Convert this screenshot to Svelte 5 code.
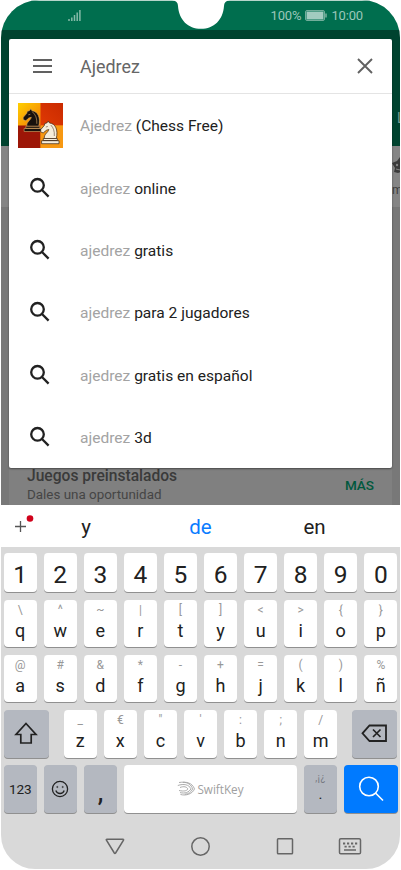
<script lang="ts">
	type Key = { main: string; alt?: string };

	const query = 'Ajedrez';

	const suggestions = [
		{ typed: 'ajedrez', rest: 'online' },
		{ typed: 'ajedrez', rest: 'gratis' },
		{ typed: 'ajedrez', rest: 'para 2 jugadores' },
		{ typed: 'ajedrez', rest: 'gratis en español' },
		{ typed: 'ajedrez', rest: '3d' }
	];

	function keys(main: string, alt: string): Key[] {
		return [...main].map((m, i) => ({ main: m, alt: alt[i] }));
	}

	const numbers = [...'1234567890'];
	const topRow = keys('qwertyuiop', '\\^~|[]<>{}');
	const homeRow = keys('asdfghjklñ', '@#&*-+=()%');
	const bottomRow = keys('zxcvbnm', '_€"\':;/');
</script>

{#snippet horse()}
	<path
		d="M4.500 18.500c-.5-4.500 4-6 4.500-9-1.500.5-2.500.5-3.500 1.500L3.500 13 .8 11.800 1 9.500l3.500-4 .5-2 2-.5 1.500-2 1.200 2c6 .5 8.800 7 6.800 15.500z"
	/>
	<path d="M3.500 18.500h14v2h-14zM1.800 20.700h17.400v3H1.800z" />
{/snippet}

{#snippet letterKey(key: Key)}
	<div class="key letter">
		<span class="alt">{key.alt}</span>
		<span class="main">{key.main}</span>
	</div>
{/snippet}

<div class="phone">
	<header class="status">
		<svg class="signal" width="13" height="12" viewBox="0 0 13 12">
			<path d="M1 9v2M3.800 7.500V11M6.500 5V11M9.200 2.500V11M11.900 0V11" />
		</svg>
		<div class="status-right">
			<span>100%</span>
			<svg width="22" height="11" viewBox="0 0 22 11">
				<rect x=".5" y=".5" width="19" height="10" rx="1.500" fill="none" stroke="#72ae9b" />
				<rect x="1.500" y="1.500" width="17" height="8" fill="#a2cbbf" />
				<path d="M21 3.500v4" stroke="#8fbeae" stroke-width="1.300" />
			</svg>
			<span>10:00</span>
		</div>
	</header>

	<div class="appbar"><span>L</span></div>
	<div class="tabs">
		<svg width="12" height="18" viewBox="0 0 12 18">
			<path d="M0 7l5-2 3-4 3 4h4v12l-6-1-3 1-4-1 1-4z" fill="#3b3b3b" />
			<circle cx="5" cy="9" r="1.200" fill="#858585" />
			<path d="M4 13l4 1 2-3" stroke="#858585" fill="none" />
		</svg>
		<span>m</span>
	</div>
	<div class="feed">
		<div class="feed-card">
			<div>
				<div class="feed-title">Juegos preinstalados</div>
				<div class="feed-sub">Dales una oportunidad</div>
			</div>
			<span class="more">MÁS</span>
		</div>
	</div>

	<div class="predictions">
		<span class="plus">
			<svg width="22" height="22" viewBox="0 0 22 22">
				<path d="M1 13.500h11M6.500 8v11" stroke="#555" stroke-width="1.300" />
				<circle cx="16" cy="5.500" r="3.300" fill="#d0021b" />
			</svg>
		</span>
		<span>y</span>
		<span class="current">de</span>
		<span>en</span>
	</div>

	<div class="keyboard">
		<div class="row digits">
			{#each numbers as n}
				<div class="key number">{n}</div>
			{/each}
		</div>
		<div class="row">
			{#each topRow as key}
				{@render letterKey(key)}
			{/each}
		</div>
		<div class="row">
			{#each homeRow as key}
				{@render letterKey(key)}
			{/each}
		</div>
		<div class="row spread">
			<div class="key dark wide">
				<svg width="24" height="23" viewBox="0 0 24 23">
					<path d="M12 1.500L22 12.500h-4.800v8.500H6.800v-8.500H2z" />
				</svg>
			</div>
			<div class="letters">
				{#each bottomRow as key}
					{@render letterKey(key)}
				{/each}
			</div>
			<div class="key dark wide">
				<svg width="27" height="19" viewBox="0 0 27 19">
					<path d="M8.500 1.500H25v15.500H8.500L1.500 9.300z" stroke-width="1.800" />
					<path d="M12 5.500l7.500 7.500M19.500 5.500L12 13" />
				</svg>
			</div>
		</div>
		<div class="row last">
			<div class="key dark small">123</div>
			<div class="key dark">
				<svg width="18" height="18" viewBox="0 0 18 18">
					<circle cx="9" cy="9" r="7.600" stroke-width="1.300" />
					<path d="M4.800 10.500c1.500 4 7 4 8.400 0" stroke-width="1.300" />
					<circle cx="6.300" cy="7" r=".6" stroke-width=".8" />
					<circle cx="11.700" cy="7" r=".6" stroke-width=".8" />
				</svg>
			</div>
			<div class="key dark comma">,</div>
			<div class="key space">
				<svg width="19" height="16" viewBox="0 0 19 16">
					<path
						d="M2 1.500c7-1 13 0 15.500 6.300C15.500 13 9 15 3.500 13.500M.8 4.500c6-2 11-1 13.200 3.300-2 3.500-6 5-11 3.800M3 6.500c4-1.500 6.500-.8 8 1.500-1.500 2-4 2.500-9 1.500M6 1.300c5 0 8 2.500 9.700 6.500-1.500 3.500-4 5-8 5.500"
						stroke="#a3a3a3"
						stroke-width=".9"
					/>
				</svg>
				<span>SwiftKey</span>
			</div>
			<div class="key dark dot">
				<span class="alt">,¡¿</span>
				<span class="main">.</span>
			</div>
			<div class="key enter">
				<svg width="28" height="28" viewBox="0 0 28 28">
					<circle cx="12" cy="11.500" r="9.300" />
					<path d="M18.500 18L26 25.500" />
				</svg>
			</div>
		</div>
	</div>

	<nav class="nav">
		<svg width="300" height="24" viewBox="0 0 300 24">
			<path d="M16.800 5.300h16.200q.8 0 .5.800L25.600 19q-.7.900-1.300 0L16.300 6q-.2-.7.500-.7z" />
			<circle cx="110.500" cy="12.500" r="8.700" />
			<rect x="187.500" y="4.800" width="15" height="15" rx=".8" />
			<rect x="249.500" y="4.800" width="21" height="15" rx="1.300" />
			<path d="M253 9.500h14.500M254.500 12.700h12" stroke-width="1.800" stroke-dasharray="2.200 1.800" />
			<path d="M254 16h12" />
		</svg>
	</nav>

	<section class="dialog">
		<div class="search">
			<svg class="menu" width="20" height="15" viewBox="0 0 20 15">
				<path d="M0 1h19M0 7h19M0 13h19" />
			</svg>
			<span class="query">{query}</span>
			<svg width="16" height="16" viewBox="0 0 16 16">
				<path d="M1 1l14 14M15 1L1 15" />
			</svg>
		</div>
		<div class="item">
			<svg class="app-icon" width="45" height="45" viewBox="0 0 45 45">
				<defs>
					<linearGradient id="gold" x1="0" y1="0" x2="1" y2="1">
						<stop offset="0" stop-color="#ffd000" />
						<stop offset=".5" stop-color="#f37a08" />
					</linearGradient>
					<linearGradient id="red" x1="1" y1="0" x2="0" y2="1">
						<stop offset="0" stop-color="#c92a00" />
						<stop offset="1" stop-color="#e03a04" />
					</linearGradient>
				</defs>
				<rect width="45" height="45" fill="url(#gold)" />
				<rect x="22.500" width="22.500" height="22.500" fill="url(#red)" />
				<rect y="22.500" width="22.500" height="22.500" fill="#9c1607" />
				<rect x="22.500" y="22.500" width="22.500" height="22.500" fill="#f79812" />
				<g transform="translate(4.300 4.800)" fill="#17110d" stroke="#d9ab66" stroke-width=".6">
					{@render horse()}
					<path d="M6 7l2-.5M10 4q5 4 4.500 12" fill="none" />
				</g>
				<g transform="translate(21.800 17)" fill="#f5eddb" stroke="#3a2415" stroke-width=".7">
					{@render horse()}
					<path d="M6 7l2-.5M11 5q4 4 3.500 11" fill="none" stroke-width=".5" />
				</g>
			</svg>
			<p><span>Ajedrez</span> (Chess Free)</p>
		</div>
		{#each suggestions as s}
			<div class="item">
				<svg class="lens" width="22" height="22" viewBox="0 0 22 22">
					<circle cx="8.500" cy="8.300" r="6.300" />
					<path d="M13 13l6.600 6.600" />
				</svg>
				<p><span>{s.typed}</span> {s.rest}</p>
			</div>
		{/each}
	</section>

	<svg class="notch" width="60" height="30" viewBox="0 0 60 30">
		<path d="M1 0Q7 1 7 6C8 20 17 28.800 30 28.800S52 20 53 6Q53 1 59 0z" fill="#fff" />
	</svg>
</div>

<style>
	:global(body) {
		background: #fff;
	}
	.phone {
		position: relative;
		box-sizing: border-box;
		width: 399px;
		height: 869px;
		margin-left: 1px;
		border-radius: 38px 38px 34px 34px;
		overflow: hidden;
		display: flex;
		flex-direction: column;
		background: #d9d9d9;
		font-family: Roboto, 'Liberation Sans', sans-serif;
		color: #212121;
	}
	svg {
		display: block;
		flex: none;
	}

	.status {
		display: flex;
		align-items: center;
		justify-content: space-between;
		box-sizing: border-box;
		height: 30px;
		padding: 0 37px 0 67px;
		background: #006e4e;
		border-top: 1px solid #b5d5ca;
		color: #9bc7ba;
		font-size: 13px;
	}
	.signal {
		stroke: #86bba9;
		stroke-width: 1.5;
	}
	.status-right {
		display: flex;
		align-items: center;
		gap: 4px;
		letter-spacing: -0.15px;
	}
	.notch {
		position: absolute;
		top: 0;
		left: 170px;
	}

	.appbar {
		height: 116px;
		background: #00432f;
		box-sizing: border-box;
		padding: 80px 0 0 396px;
		color: #7c9b90;
		font-size: 14px;
	}
	.tabs {
		height: 62px;
		box-sizing: border-box;
		padding: 10px 0 0 391px;
		background: #858585;
		border-bottom: 1px solid #777;
		font-size: 12px;
		color: #3d3d3d;
		white-space: nowrap;
	}
	.tabs span {
		display: block;
		margin-top: 9px;
	}
	.feed {
		display: flex;
		align-items: flex-end;
		height: 297px;
		padding: 0 8px;
		background: #787878;
	}
	.feed-card {
		display: flex;
		flex: 1;
		justify-content: space-between;
		align-items: center;
		height: 41px;
		padding: 0 18px;
		background: #808080;
	}
	.feed-title {
		padding-top: 1px;
		font-size: 15.6px;
		font-weight: 500;
		line-height: 20px;
		color: #3a3a3a;
	}
	.feed-sub {
		font-size: 13.4px;
		line-height: 18px;
		color: #454545;
	}
	.more {
		font-size: 13.5px;
		font-weight: 500;
		color: #00583d;
	}

	.predictions {
		display: grid;
		grid-template-columns: 28px 114px 115px 113px;
		align-items: center;
		justify-items: center;
		box-sizing: border-box;
		height: 42px;
		padding-top: 2px;
		background: #fff;
		font-size: 20.5px;
	}
	.plus {
		justify-self: start;
		margin: -6px 0 0 13px;
	}
	.current {
		color: #0a7cff;
	}

	.keyboard {
		display: flex;
		flex-direction: column;
		gap: 7.5px;
		padding: 6px 2.5px 0;
	}
	.row {
		display: grid;
		grid-template-columns: repeat(10, 1fr);
		gap: 6.7px;
		height: 47.7px;
	}
	.row.digits {
		height: 39px;
	}
	.row.spread {
		display: flex;
		justify-content: space-between;
	}
	.row.last {
		grid-template-columns: 33.5px 33.5px 33.5px 1fr 33.5px 53.7px;
	}
	.letters {
		display: grid;
		grid-template-columns: repeat(7, 33.4px);
		gap: 6.7px;
	}
	.key {
		display: flex;
		align-items: center;
		justify-content: center;
		box-sizing: border-box;
		background: #fff;
		border-radius: 4px;
		box-shadow: 0 1px 0.5px #909090;
	}
	.key svg {
		fill: none;
		stroke: #222;
		stroke-width: 1.7;
	}
	.number {
		font-size: 24.5px;
		padding-top: 3px;
	}
	.letter {
		flex-direction: column;
		justify-content: flex-start;
	}
	.letter .alt {
		height: 21px;
		font-size: 12px;
		line-height: 21px;
		color: #989898;
	}
	.letter .main {
		font-size: 18px;
		line-height: 20px;
	}
	.dark {
		background: #b4b8c0;
	}
	.wide {
		width: 45.5px;
	}
	.small {
		font-size: 13.6px;
		letter-spacing: -0.1px;
	}
	.comma {
		padding-top: 8px;
		font-size: 25px;
		font-weight: 500;
	}
	.space {
		gap: 1px;
		color: #a0a0a0;
		font-family: 'Open Sans', sans-serif;
		font-size: 11.7px;
	}
	.dot {
		flex-direction: column;
		justify-content: flex-start;
		padding-top: 5px;
	}
	.dot .alt {
		font-size: 10px;
		line-height: 15px;
		letter-spacing: 0.4px;
		color: #777a82;
	}
	.dot .main {
		font-size: 15px;
		line-height: 19px;
	}
	.key.enter {
		background: #007aff;
	}
	.key.enter svg {
		stroke: #fff;
		stroke-width: 1.6;
	}

	.nav {
		margin-top: 21px;
		padding-left: 89px;
	}
	.nav svg {
		fill: none;
		stroke: #666;
		stroke-width: 1.5;
	}

	.dialog {
		position: absolute;
		top: 39px;
		left: 8px;
		width: 383px;
		height: 429px;
		background: #fff;
		border-radius: 2px;
		box-shadow: 0 1px 2px rgba(0, 0, 0, 0.45);
	}
	.search {
		display: flex;
		align-items: center;
		box-sizing: border-box;
		height: 55px;
		padding: 0 19px 0 24px;
		border-bottom: 1px solid #e4e4e4;
	}
	.search svg {
		fill: none;
		stroke: #616161;
		stroke-width: 1.9;
	}
	.query {
		flex: 1;
		margin-left: 27px;
		font-size: 17.9px;
		color: #666;
	}
	.item {
		display: flex;
		align-items: center;
		height: 62.4px;
	}
	.item p {
		margin: 0;
		padding-top: 2px;
		font-size: 15.55px;
	}
	.item p span {
		color: #a3a3a3;
	}
	.app-icon {
		margin: 0 17px 0 9px;
	}
	.lens {
		margin: 0 29px 0 20px;
		fill: none;
		stroke: #212121;
		stroke-width: 2.3;
	}
</style>
